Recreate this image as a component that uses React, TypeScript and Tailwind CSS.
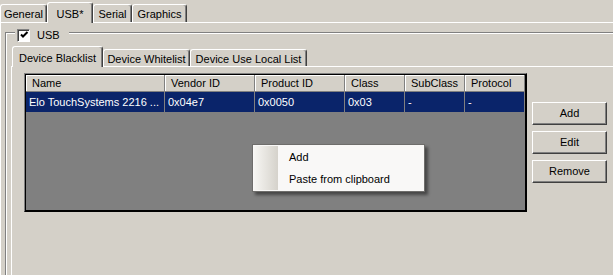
import React from "react";

// classic win2k-style property page: USB tab with a device list and a context menu

type Column = { label: string; width: string };

const columns: Column[] = [
  { label: "Name", width: "w-[139px]" },
  { label: "Vendor ID", width: "w-[90px]" },
  { label: "Product ID", width: "w-[90px]" },
  { label: "Class", width: "w-[60px]" },
  { label: "SubClass", width: "w-[60px]" },
  { label: "Protocol", width: "flex-1" },
];

const row = ["Elo TouchSystems 2216 ...", "0x04e7", "0x0050", "0x03", "-", "-"];

const Tab = ({
  label,
  width,
  selected,
  small,
}: {
  label: string;
  width: string;
  selected?: boolean;
  small?: boolean;
}) => {
  if (selected) {
    return (
      <div
        className={`relative z-10 -mb-px flex ${small ? "h-[21px]" : "h-[21px]"} ${width} items-start justify-center rounded-t-[3px] border-t border-l border-r border-t-white border-l-white border-r-[#404040] bg-[#d4d0c8] pt-[3px] shadow-[inset_-1px_0_0_#808080]`}
      >
        {label}
      </div>
    );
  }
  return (
    <div
      className={`flex ${small ? "h-[17px]" : "h-[18px]"} ${width} items-start justify-center rounded-t-[3px] border-t border-l border-r border-t-white border-l-white border-r-[#404040] pt-[1px] shadow-[inset_-1px_0_0_#808080]`}
    >
      {label}
    </div>
  );
};

const Button = ({ label }: { label: string }) => (
  <div className="flex h-[23px] w-[75px] items-center justify-center border border-t-white border-l-white border-r-[#404040] border-b-[#404040] shadow-[inset_-1px_-1px_0_#808080]">
    {label}
  </div>
);

const Checkbox = () => (
  <div className="flex h-[13px] w-[13px] items-center justify-center border border-t-[#808080] border-l-[#808080] border-r-white border-b-white bg-white shadow-[inset_1px_1px_0_#404040]">
    <svg width="9" height="9" viewBox="0 0 9 9" className="ml-px mt-px">
      <path d="M1 3.5 L3 5.5 L7.5 1" stroke="#000" strokeWidth="2" fill="none" />
    </svg>
  </div>
);

export default function App() {
  return (
    <div className="relative flex h-[275px] w-[613px] flex-col overflow-hidden bg-[#d4d0c8] font-['Liberation_Sans',Arial,sans-serif] text-[11px] text-black">
      {/* outer tab strip */}
      <div className="flex h-[22px] shrink-0 items-end">
        <Tab label="General" width="w-[47px]" />
        <Tab label="USB*" width="w-[46px]" selected />
        <Tab label="Serial" width="w-[39px]" />
        <Tab label="Graphics" width="w-[55px]" />
      </div>

      {/* outer tab page */}
      <div className="flex flex-1 flex-col border-t border-l border-white pt-[9px] pl-[4px]">
        {/* group box */}
        <div className="relative flex flex-1 flex-col border-t border-l border-[#808080] pt-[13px] pl-[5px] shadow-[inset_1px_1px_0_#fff]">
          <div className="absolute top-[-6px] left-[9px] flex items-center gap-[7px] bg-[#d4d0c8] pr-[9px] pl-[2px]">
            <Checkbox />
            <span>USB</span>
          </div>

          {/* inner tab strip */}
          <div className="ml-px flex h-[20px] shrink-0 items-end">
            <Tab label="Device Blacklist" width="w-[91px]" selected small />
            <Tab label="Device Whitelist" width="w-[87px]" small />
            <Tab label="Device Use Local List" width="w-[117px]" small />
          </div>

          {/* inner tab page */}
          <div className="flex flex-1 gap-[5px] border-t border-l border-white pt-[6px] pl-[12px]">
            {/* list view */}
            <div className="h-[139px] w-[503px] border border-t-[#808080] border-l-[#808080] border-r-black border-b-black">
              <div className="flex h-full flex-col border border-black bg-[#808080]">
                <div className="flex h-[17px] bg-[#d4d0c8]">
                  {columns.map((c) => (
                    <div
                      key={c.label}
                      className={`${c.width} flex items-center border-r border-b border-r-[#808080] border-b-[#808080] pl-[6px] shadow-[inset_1px_1px_0_#fff]`}
                    >
                      {c.label}
                    </div>
                  ))}
                </div>
                <div className="flex h-[21px] bg-[#0a246a] text-white">
                  {columns.map((c, i) => (
                    <div
                      key={c.label}
                      className={`${c.width} flex items-center border-r border-b border-[#808080] pl-[3px] whitespace-nowrap`}
                    >
                      {row[i]}
                    </div>
                  ))}
                </div>
              </div>
            </div>

            {/* buttons */}
            <div className="mt-[29px] flex flex-col gap-[6px]">
              <Button label="Add" />
              <Button label="Edit" />
              <Button label="Remove" />
            </div>
          </div>
        </div>
      </div>

      {/* context menu */}
      <div className="absolute top-[144px] left-[252px] flex h-[48px] w-[173px] border border-[#6e6d6b] bg-[#f9f8f7] shadow-[3px_3px_3px_rgba(0,0,0,0.45)]">
        <div className="my-px ml-px w-[24px] bg-gradient-to-r from-[#f7f6f3] to-[#d5d2cb]" />
        <div className="flex flex-1 flex-col pt-px">
          <div className="flex h-[22px] items-center pl-[11px]">Add</div>
          <div className="flex h-[22px] items-center pl-[11px]">Paste from clipboard</div>
        </div>
      </div>
    </div>
  );
}
